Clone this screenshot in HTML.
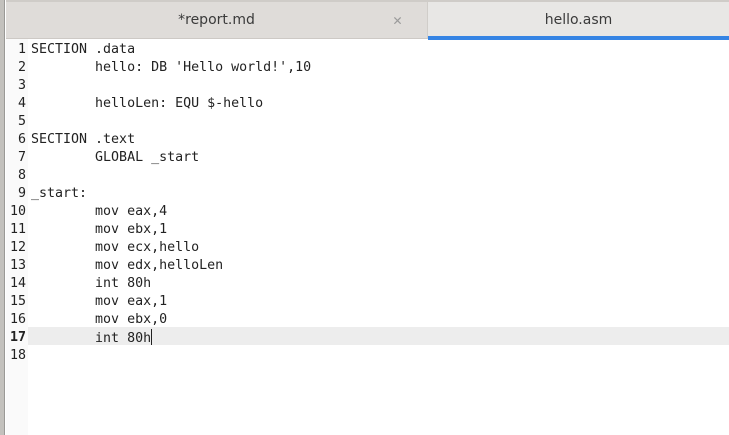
<!DOCTYPE html>
<html><head><style>
*{margin:0;padding:0;box-sizing:border-box}
body{width:729px;height:435px;overflow:hidden;background:#fff;position:relative;font-family:"DejaVu Sans Mono",monospace}
.lb{position:absolute;left:0;top:0;width:5px;height:435px;background:#c3c1bd;border-right:1px solid #9a9996}
.tabs{position:absolute;left:6px;top:0;width:723px;height:39px;background:#dfdcd9;border-top:2px solid #cfccc8;border-bottom:1px solid #cdc9c5}
.t1{position:absolute;left:0;top:0;width:421px;height:36px;font:14px "DejaVu Sans",sans-serif;color:#3a3a3a;text-align:center;line-height:36px}
.x{position:absolute;left:387px;top:9px;color:#9a9a9a;font-size:15px;line-height:18px}
.t2{position:absolute;left:421px;top:0;width:302px;height:37px;background:#e8e7e5;font:14px "DejaVu Sans",sans-serif;color:#3a3a3a;text-align:center;line-height:36px;border-left:1px solid #d0cdc9}
.t2:after{content:"";position:absolute;left:0;right:0;bottom:-1px;height:4px;background:#3584e4}
.gut{position:absolute;left:6px;top:39px;width:22px;height:396px;background:#fafafa}
.cur{position:absolute;left:28px;top:327px;width:701px;height:18px;background:#ededed}
.ln{position:absolute;left:6px;width:20px;text-align:right;font-size:13.3px;color:#222;line-height:18px}
.code{position:absolute;left:31px;top:41px;font-size:13.3px;line-height:18px;color:#222;white-space:pre}
.caret{display:inline-block;width:1px;height:16px;background:#222;vertical-align:-3px}
</style></head><body>
<div class="lb"></div>
<div class="tabs"><div class="t1">*report.md</div><div class="x">✕</div><div class="t2">hello.asm</div></div>
<div class="gut"></div>
<div class="cur"></div>
<div class="ln" style="top:41px">1<br>2<br>3<br>4<br>5<br>6<br>7<br>8<br>9<br>10<br>11<br>12<br>13<br>14<br>15<br>16<br><b>17</b><br>18</div>
<div class="code">SECTION .data
        hello: DB 'Hello world!',10

        helloLen: EQU $-hello

SECTION .text
        GLOBAL _start

_start:
        mov eax,4
        mov ebx,1
        mov ecx,hello
        mov edx,helloLen
        int 80h
        mov eax,1
        mov ebx,0
        int 80h<span class="caret"></span>
</div>
</body></html>
